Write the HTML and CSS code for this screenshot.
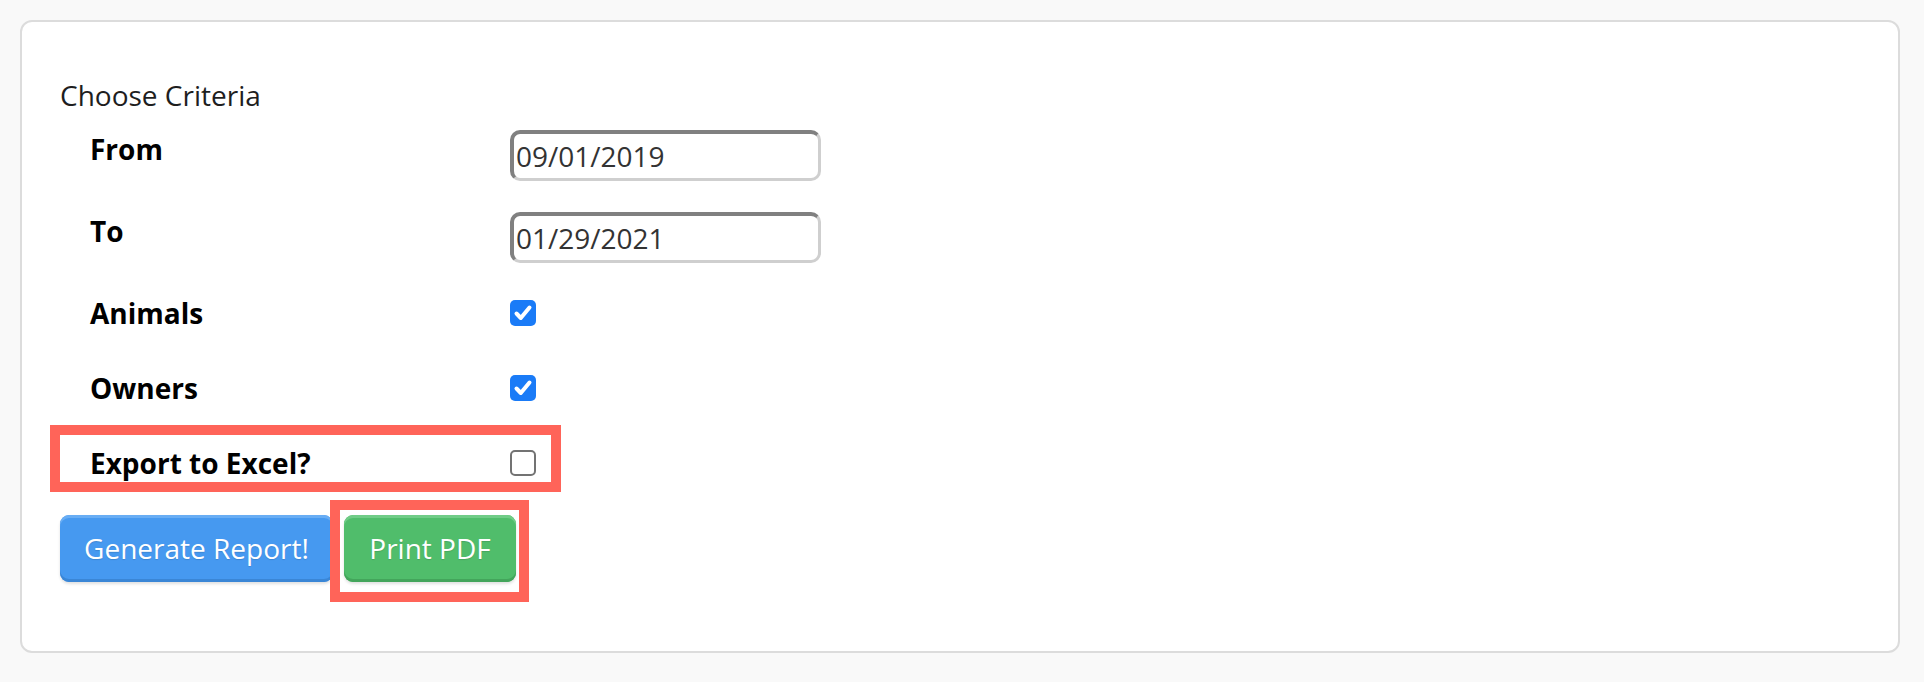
FILE: index.html
```html
<!DOCTYPE html>
<html lang="en">
<head>
<meta charset="utf-8">
<title>Choose Criteria</title>
<link rel="stylesheet" href="styles.css">
</head>
<body>
<div class="card">
  <div class="title">Choose Criteria</div>
  <div class="rows">
    <div class="row row-input">
      <div class="label">From</div>
      <div class="control"><span class="date">09/01/2019</span></div>
    </div>
    <div class="row row-input">
      <div class="label">To</div>
      <div class="control"><span class="date">01/29/2021</span></div>
    </div>
    <div class="row row-check">
      <div class="label">Animals</div>
      <div class="control">
        <span class="cb cb-on"><svg viewBox="0 0 26 26" width="26" height="26"><path d="M6.5 13.5 L10.8 18 L19.5 7.5" fill="none" stroke="#fff" stroke-width="4" stroke-linecap="round" stroke-linejoin="round"/></svg></span>
      </div>
    </div>
    <div class="row row-check">
      <div class="label">Owners</div>
      <div class="control">
        <span class="cb cb-on"><svg viewBox="0 0 26 26" width="26" height="26"><path d="M6.5 13.5 L10.8 18 L19.5 7.5" fill="none" stroke="#fff" stroke-width="4" stroke-linecap="round" stroke-linejoin="round"/></svg></span>
      </div>
    </div>
    <div class="row row-check highlight-row">
      <div class="label">Export to Excel?</div>
      <div class="control"><span class="cb cb-off"></span></div>
      <div class="mark mark-export"></div>
    </div>
  </div>
  <div class="actions">
    <button class="btn btn-blue">Generate Report!</button>
    <span class="pdf-wrap">
      <button class="btn btn-green">Print PDF</button>
      <span class="mark mark-pdf"></span>
    </span>
  </div>
</div>
</body>
</html>
```
FILE: styles.css
```css
html, body {
  margin: 0;
  padding: 0;
  background: #f9f9f9;
}
body {
  padding: 20px 24px 29px 20px;
  font-family: "Open Sans", "Liberation Sans", sans-serif;
}
.card {
  background: #fff;
  border: 2px solid #dcdcdc;
  border-radius: 12px;
  padding: 51px 38px 0 38px;
  box-sizing: border-box;
  height: 633px;
}
.title {
  font-size: 28px;
  line-height: 44px;
  color: #1e1e1e;
  margin-bottom: 13px;
}
.rows {
  display: flex;
  flex-direction: column;
  gap: 31px;
}
.row {
  position: relative;
  display: flex;
  padding-left: 30px;
}
.row-input {
  align-items: flex-start;
}
.row-check {
  align-items: center;
}
.row-input + .row-check {
  margin-top: -3px;
}
.label {
  width: 420px;
  font-size: 28px;
  font-weight: 700;
  line-height: 44px;
  color: #000;
}
.row-input .label {
  margin-top: -3px;
  height: 51px;
}
.date {
  display: flex;
  align-items: center;
  box-sizing: border-box;
  width: 311px;
  height: 51px;
  padding: 0 4px 1px 2px;
  border-radius: 10px;
  border-style: solid;
  border-width: 4px 3px 3px 4px;
  border-color: #808080 #cfcfcf #cfcfcf #808080;
  font-size: 28px;
  color: #333;
}
.cb {
  display: block;
  width: 26px;
  height: 26px;
  box-sizing: border-box;
  border-radius: 5px;
}
.cb svg {
  display: block;
}
.cb-on {
  background: #1a7bf7;
}
.cb-off {
  border: 2px solid #737373;
  background: #fff;
}
.control {
  display: flex;
  align-items: center;
}
.actions {
  display: flex;
  align-items: flex-start;
  gap: 11px;
  margin-top: 30px;
}
.btn {
  font-family: "Open Sans", "Liberation Sans", sans-serif;
  font-size: 28px;
  color: #fff;
  height: 67px;
  padding: 0 0 2px;
  border-radius: 9px;
  border: 0;
  white-space: nowrap;
  text-align: center;
  text-shadow: 0 1px 1px rgba(0, 0, 0, 0.12);
}
.btn-blue {
  width: 273px;
  background: #4699f0;
  box-shadow: inset 0 3px 0 #68adf4, inset 0 -3px 0 #3a86d6, 0 2px 3px rgba(0, 0, 0, 0.12);
}
.btn-green {
  width: 172px;
  background: #50bd6b;
  box-shadow: inset 0 3px 0 #70cc87, inset 0 -3px 0 #43a55b, 0 2px 3px rgba(0, 0, 0, 0.12);
}
.pdf-wrap {
  position: relative;
  display: block;
}
.mark {
  position: absolute;
  border: 10px solid #ff6459;
  box-sizing: border-box;
  pointer-events: none;
}
.mark-export {
  left: -10px;
  top: -16px;
  width: 511px;
  height: 67px;
}
.mark-pdf {
  left: -14px;
  top: -15px;
  width: 199px;
  height: 102px;
}
```
